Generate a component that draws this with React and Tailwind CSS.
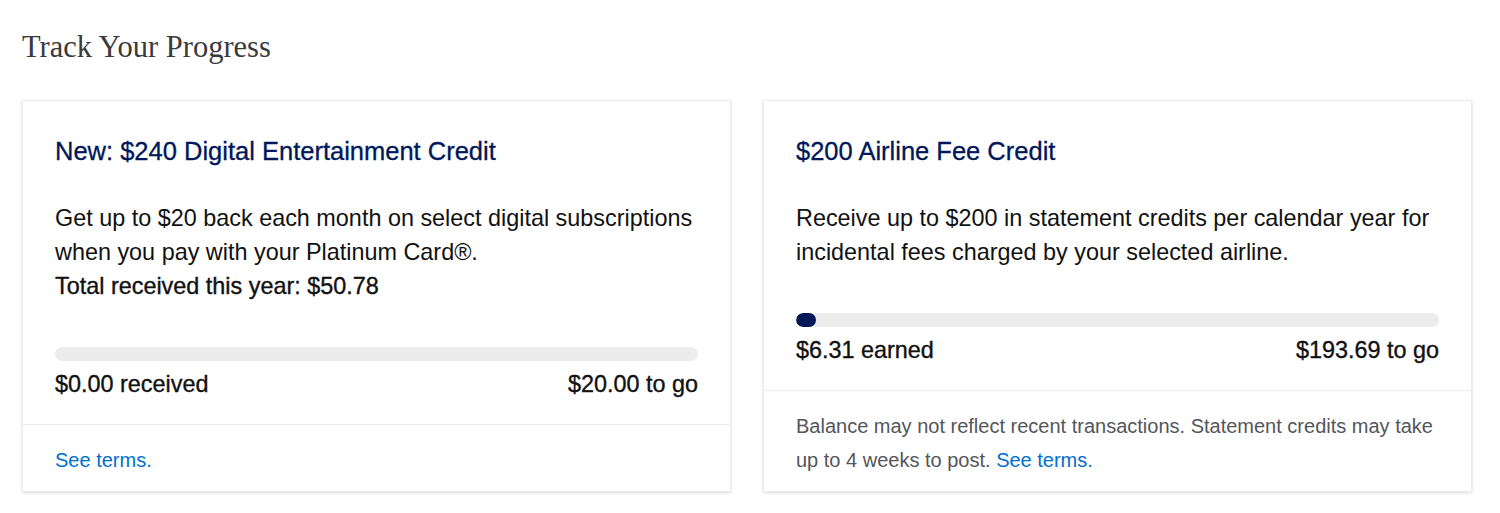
const credits = [
  {
    title: "New: $240 Digital Entertainment Credit",
    body: [
      "Get up to $20 back each month on select digital subscriptions when you pay with your Platinum Card®.",
    ],
    total: "Total received this year: $50.78",
    earned: 0,
    max: 20,
    left: "$0.00 received",
    right: "$20.00 to go",
    note: null,
  },
  {
    title: "$200 Airline Fee Credit",
    body: [
      "Receive up to $200 in statement credits per calendar year for incidental fees charged by your selected airline.",
    ],
    total: null,
    earned: 6.31,
    max: 200,
    left: "$6.31 earned",
    right: "$193.69 to go",
    note: "Balance may not reflect recent transactions. Statement credits may take up to 4 weeks to post.",
  },
];

function CreditCard({ credit }) {
  const pct = (credit.earned / credit.max) * 100;
  return (
    <div className="bg-white border border-[#ececec] shadow-[0_1px_3px_rgba(0,0,0,0.14)] flex flex-col">
      <div className="px-8 pt-8 pb-[23px]">
        <h3 className="text-[25.5px] leading-[36px] text-[#00175a] [-webkit-text-stroke:0.3px_#00175a]">
          {credit.title}
        </h3>
        <div className="mt-8 text-[23.4px] leading-[34px] text-[#111]">
          {credit.body.map((b) => (
            <p key={b}>{b}</p>
          ))}
          {credit.total && (
            <p className="[-webkit-text-stroke:0.35px_#111]">{credit.total}</p>
          )}
        </div>
        <div className="mt-[44px] h-[14px] rounded-full bg-[#ececec] overflow-hidden">
          {credit.earned > 0 && (
            <div
              className="h-full rounded-full bg-[#00175a]"
              style={{ width: `${Math.max(pct, 3)}%` }}
            />
          )}
        </div>
        <div className="mt-[6px] flex justify-between text-[23.4px] leading-[34px] text-[#111] [-webkit-text-stroke:0.35px_#111]">
          <span>{credit.left}</span>
          <span>{credit.right}</span>
        </div>
      </div>
      <p className="border-t border-[#ececec] px-8 pt-[18px] pb-[14px] text-[20px] leading-[34px] text-[#53565a]">
        {credit.note ? credit.note + " " : ""}
        <a href="#" className="text-[#006fcf]">
          See terms.
        </a>
      </p>
    </div>
  );
}

export default function App() {
  return (
    <div className="bg-white min-h-screen pl-[22px] pr-[28px] pt-[30px] font-['Liberation_Sans',Arial,sans-serif]">
      <h2 className="font-['Liberation_Serif','Times_New_Roman',serif] text-[30.5px] leading-[34px] text-[#3a3a3a]">
        Track Your Progress
      </h2>
      <div className="mt-9 grid grid-cols-2 gap-8 items-start">
        {credits.map((c) => (
          <CreditCard key={c.title} credit={c} />
        ))}
      </div>
    </div>
  );
}
